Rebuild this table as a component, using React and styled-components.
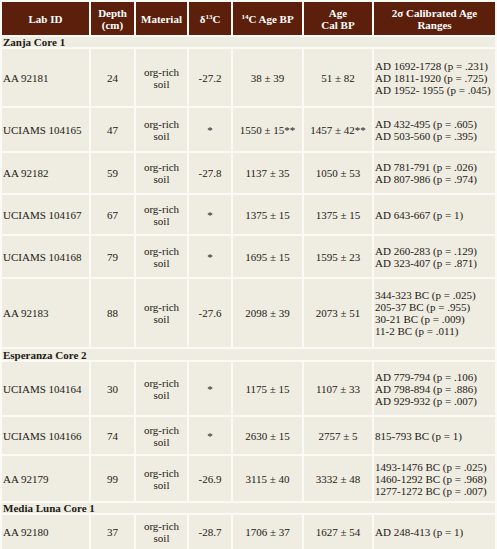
import React from "react";
import styled, { createGlobalStyle } from "styled-components";

const serif = `"Liberation Serif", "Times New Roman", Tinos, "DejaVu Serif", serif`;

const GlobalStyle = createGlobalStyle`
  body {
    margin: 0;
    background: #fbfaf4;
    font-family: ${serif};
  }
`;

const Table = styled.table`
  width: 497px;
  table-layout: fixed;
  border-collapse: separate;
  border-spacing: 2px;
  background: #fbfaf4;
  font-family: ${serif};
  font-size: 11px;
  line-height: 12.5px;
  color: #1c1a16;
`;

const HeadCell = styled.th`
  background: #5b1f0b;
  color: #ffffff;
  font-family: ${serif};
  font-size: 11px;
  font-weight: bold;
  text-align: center;
  vertical-align: middle;
  height: 33px;
  padding: 0 1px;
  line-height: 12px;
`;

const Row = styled.tr`
  height: ${(p) => p.$h}px;
`;

const Cell = styled.td`
  background: #efece1;
  font-family: ${serif};
  font-size: 11px;
  line-height: 12px;
  text-align: ${(p) => (p.$left ? "left" : "center")};
  vertical-align: middle;
  padding: 0 0 0 ${(p) => (p.$left ? "1px" : "0")};
  white-space: nowrap;
  overflow: hidden;
`;

const SectionCell = styled.td`
  background: #efece1;
  font-family: ${serif};
  font-size: 11px;
  font-weight: bold;
  text-align: left;
  padding: 0 0 0 1px;
  height: ${(p) => p.$h}px;
  line-height: 10px;
`;

const Sup = styled.sup`
  font-size: 7px;
  line-height: 0;
  vertical-align: 4px;
`;

const Line = styled.div`
  display: block;
`;

const widths = [87, 43, 51, 42, 69, 68, 121];

const groups = [
  {
    name: "Zanja Core 1",
    h: 10,
    rows: [
      ["AA 92181", "24", "-27.2", "38 ± 39", "51 ± 82", ["AD 1692-1728 (p = .231)", "AD 1811-1920 (p = .725)", "AD 1952- 1955 (p = .045)"], 57],
      ["UCIAMS 104165", "47", "*", "1550 ± 15**", "1457 ± 42**", ["AD 432-495 (p = .605)", "AD 503-560 (p = .395)"], 43],
      ["AA 92182", "59", "-27.8", "1137 ± 35", "1050 ± 53", ["AD 781-791 (p = .026)", "AD 807-986 (p = .974)"], 40],
      ["UCIAMS 104167", "67", "*", "1375 ± 15", "1375 ± 15", ["AD 643-667 (p = 1)"], 39],
      ["UCIAMS 104168", "79", "*", "1695 ± 15", "1595 ± 23", ["AD 260-283 (p = .129)", "AD 323-407 (p = .871)"], 41],
      ["AA 92183", "88", "-27.6", "2098 ± 39", "2073 ± 51", ["344-323 BC (p = .025)", "205-37 BC (p = .955)", "30-21 BC (p = .009)", "11-2 BC (p = .011)"], 68],
    ],
  },
  {
    name: "Esperanza Core 2",
    h: 11,
    rows: [
      ["UCIAMS 104164", "30", "*", "1175 ± 15", "1107 ± 33", ["AD 779-794 (p = .106)", "AD 798-894 (p = .886)", "AD 929-932 (p = .007)"], 53],
      ["UCIAMS 104166", "74", "*", "2630 ± 15", "2757 ± 5", ["815-793 BC (p = 1)"], 37],
      ["AA 92179", "99", "-26.9", "3115 ± 40", "3332 ± 48", ["1493-1476 BC (p = .025)", "1460-1292 BC (p = .968)", "1277-1272 BC (p = .007)"], 45],
    ],
  },
  {
    name: "Media Luna Core 1",
    h: 9,
    rows: [
      ["AA 92180", "37", "-28.7", "1706 ± 37", "1627 ± 54", ["AD 248-413 (p = 1)"], 34],
    ],
  },
];

export default function App() {
  return (
    <>
      <GlobalStyle />
      <Table>
        <colgroup>
          {widths.map((w, i) => (
            <col key={i} style={{ width: w }} />
          ))}
        </colgroup>
        <thead>
          <tr>
            <HeadCell>Lab ID</HeadCell>
            <HeadCell>
              <Line>Depth</Line>
              <Line>(cm)</Line>
            </HeadCell>
            <HeadCell>Material</HeadCell>
            <HeadCell>
              δ<Sup>13</Sup>C
            </HeadCell>
            <HeadCell>
              <Sup>14</Sup>C Age BP
            </HeadCell>
            <HeadCell>
              <Line>Age</Line>
              <Line>Cal BP</Line>
            </HeadCell>
            <HeadCell>
              <Line>2σ Calibrated Age</Line>
              <Line>Ranges</Line>
            </HeadCell>
          </tr>
        </thead>
        <tbody>
          {groups.map((g) => (
            <React.Fragment key={g.name}>
              <tr>
                <SectionCell colSpan={7} $h={g.h}>
                  {g.name}
                </SectionCell>
              </tr>
              {g.rows.map((r) => (
                <Row key={r[0]} $h={r[6]}>
                  <Cell $left>{r[0]}</Cell>
                  <Cell>{r[1]}</Cell>
                  <Cell>
                    <Line>org-rich</Line>
                    <Line>soil</Line>
                  </Cell>
                  <Cell>{r[2]}</Cell>
                  <Cell>{r[3]}</Cell>
                  <Cell>{r[4]}</Cell>
                  <Cell $left>
                    {r[5].map((t) => (
                      <Line key={t}>{t}</Line>
                    ))}
                  </Cell>
                </Row>
              ))}
            </React.Fragment>
          ))}
        </tbody>
      </Table>
    </>
  );
}
